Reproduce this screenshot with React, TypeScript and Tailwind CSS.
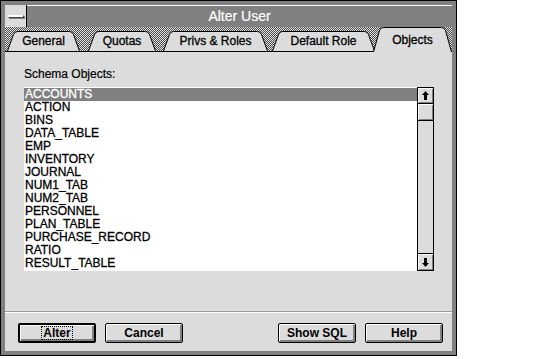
import React from 'react';

const objects = [
  'ACCOUNTS',
  'ACTION',
  'BINS',
  'DATA_TABLE',
  'EMP',
  'INVENTORY',
  'JOURNAL',
  'NUM1_TAB',
  'NUM2_TAB',
  'PERSONNEL',
  'PLAN_TABLE',
  'PURCHASE_RECORD',
  'RATIO',
  'RESULT_TABLE',
];

type TabProps = { label: string; w: number; ml: number; selected?: boolean };

function Tab({ label, w, ml, selected }: TabProps) {
  const h = selected ? 25 : 20;
  const s = 7;
  const outline = `M0.5,${h} L${s - 0.5},3.5 Q${s + 0.5},0.5 ${s + 3.5},0.5 L${w - s - 3.5},0.5 Q${w - s - 0.5},0.5 ${w - s + 0.5},3.5 L${w - 0.5},${h}`;
  return (
    <div
      className={`relative flex items-center justify-center shrink-0 ${selected ? 'h-[25px] -mb-px z-10 pt-[1px]' : 'h-[20px] pt-[1px]'}`}
      style={{ width: w, marginLeft: ml }}
    >
      <svg className="absolute inset-0" width={w} height={h} viewBox={`0 0 ${w} ${h}`}>
        <path d={`${outline} Z`} fill="#dcdcdc" stroke="none" />
        <path d={outline} fill="none" stroke="#000" strokeWidth="1" />
      </svg>
      <span className="relative text-[12px] leading-[13px] text-black [-webkit-text-stroke:0.3px_currentColor]">{label}</span>
    </div>
  );
}

function Arrow({ down }: { down?: boolean }) {
  return (
    <svg width="7" height="9" viewBox="0 0 7 9" className={down ? 'rotate-180' : ''}>
      <path d="M3.5 0 L7 4 L5 4 L5 9 L2 9 L2 4 L0 4 Z" fill="#000" />
    </svg>
  );
}

function Button({ label, isDefault }: { label: string; isDefault?: boolean }) {
  return (
    <button
      className={`w-[78px] h-[20px] flex items-center justify-center bg-[#dcdcdc] rounded-[2px] border-black shadow-[inset_1px_1px_0_#fff,inset_-2px_-2px_0_#808080] text-[12px] font-bold text-black ${isDefault ? 'border-2' : 'border'}`}
    >
      {isDefault ? (
        <span className="border border-dotted border-black px-[1px] leading-[12px]">{label}</span>
      ) : (
        <span className="leading-[12px]">{label}</span>
      )}
    </button>
  );
}

export default function App() {
  return (
    <div className="w-[536px] h-[359px] bg-white font-['Liberation_Sans',Arial,sans-serif]">
      <div className="w-[457px] h-[356px] bg-[#808080] border border-black p-[4px] flex flex-col">
        {/* title bar */}
        <div className="h-[22px] flex shrink-0">
          <div className="w-[22px] h-full bg-[#dcdcdc] border-r border-black flex items-center justify-center">
            <div className="w-[16px] h-[3px] bg-white border border-[#404040] border-t-white border-l-white shadow-[1px_1px_0_#808080]" />
          </div>
          <div className="flex-1 border-t border-white flex items-center justify-center text-white text-[14px] pb-[1px] [-webkit-text-stroke:0.2px_currentColor]">
            Alter User
          </div>
        </div>

        {/* tab strip */}
        <div className="h-[25px] shrink-0 flex items-end border-b border-black [background-image:repeating-conic-gradient(#4a4a4a_0_25%,#e4e4e4_0_50%)] [background-size:2px_2px]">
          <Tab label="General" w={73} ml={2} />
          <Tab label="Quotas" w={68} ml={8} />
          <Tab label="Privs & Roles" w={105} ml={7} />
          <Tab label="Default Role" w={103} ml={4} />
          <Tab label="Objects" w={79} ml={-2} selected />
        </div>

        {/* page */}
        <div className="flex-1 bg-[#dcdcdc] flex flex-col">
          <div className="h-[259px] shrink-0 pl-[19px] pt-[16px] flex flex-col">
            <div className="text-[12px] leading-[13px] text-black [-webkit-text-stroke:0.2px_currentColor]">Schema Objects:</div>
            <div className="mt-[6px] flex h-[184px] w-[410px]">
              <div className="flex-1 bg-white pt-px">
                {objects.map((o, i) => (
                  <div
                    key={o}
                    className={`h-[13px] leading-[13px] pl-[1px] text-[12px] [-webkit-text-stroke:0.3px_currentColor] ${i === 0 ? 'bg-[#808080] text-white' : 'text-black'}`}
                  >
                    {o}
                  </div>
                ))}
              </div>
              <div className="w-[17px] border border-black flex flex-col bg-[#dcdcdc]">
                <div className="h-[16px] border-b border-black flex items-center justify-center shadow-[inset_1px_1px_0_#fff,inset_-1px_-1px_0_#808080]">
                  <Arrow />
                </div>
                <div className="h-[17px] border-b border-black shadow-[inset_1px_1px_0_#fff,inset_-1px_-1px_0_#808080]" />
                <div className="flex-1" />
                <div className="h-[17px] border-t border-black flex items-center justify-center shadow-[inset_1px_1px_0_#fff,inset_-1px_-1px_0_#808080]">
                  <Arrow down />
                </div>
              </div>
            </div>
          </div>
          <div className="h-px bg-[#9a9a9a]" />
          <div className="h-px bg-white" />
          <div className="flex-1 flex items-start pt-[10px] pl-[13px] pr-[9px]">
            <div className="flex gap-[9px]">
              <Button label="Alter" isDefault />
              <Button label="Cancel" />
            </div>
            <div className="flex-1" />
            <div className="flex gap-[9px]">
              <Button label="Show SQL" />
              <Button label="Help" />
            </div>
          </div>
        </div>
      </div>
    </div>
  );
}
